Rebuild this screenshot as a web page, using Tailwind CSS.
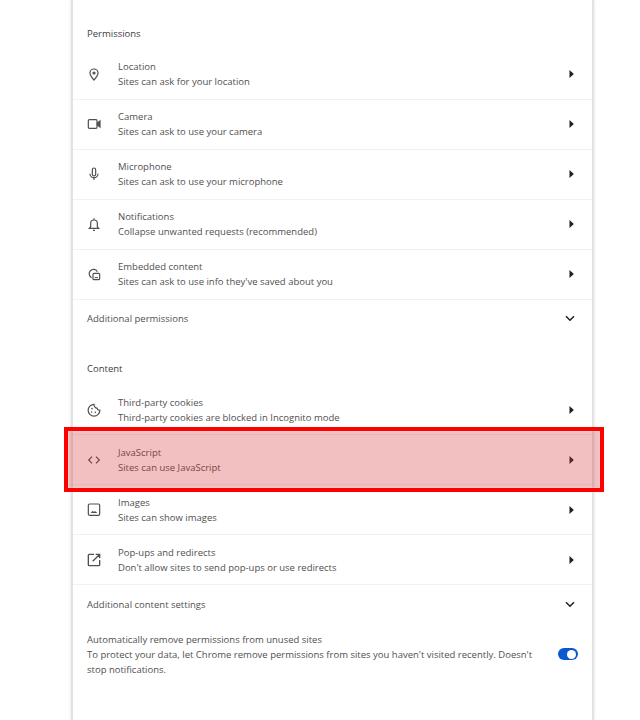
<!DOCTYPE html>
<html>
<head>
    <title>Site settings</title>
    <script src="https://cdn.jsdelivr.net/npm/@tailwindcss/browser@4"></script>
</head>
<body class="bg-white font-['Open_Sans',sans-serif] text-[9.5px] leading-[15px] text-[#505050]">
<div class="relative w-[640px] h-[720px] overflow-hidden">
    <div class="ml-[71px] w-[523px] h-[720px] bg-white border-x-2 border-[#e2e2e2] shadow-[0_0_3px_rgba(0,0,0,0.12)]">
        <!-- Permissions -->
        <h2 class="h-[50px] pt-[26px] pl-[14px] font-medium text-[#3c4043]">Permissions</h2>

        <div class="flex h-[50px] items-center border-b border-[#f1f1f1] pb-[2px] pl-[14px] pr-[18px]">
            <svg class="w-[16px] h-[16px] -ml-px mr-[16px] shrink-0" viewBox="0 0 24 24" fill="none" stroke="#505050" stroke-width="1.800"><path d="M12 21c-4-4.500-6-7.600-6-10.500a6 6 0 0 1 12 0c0 2.900-2 6-6 10.500z"/><circle cx="12" cy="10.500" r="1.500" fill="#505050"/></svg>
            <div class="flex-1 pt-px"><div>Location</div><div>Sites can ask for your location</div></div>
            <svg class="w-[5px] h-[8px]" viewBox="0 0 5 8"><path d="M0.500 0L4.800 4L0.500 8z" fill="#1f1f1f"/></svg>
        </div>
        <div class="flex h-[50px] items-center border-b border-[#f1f1f1] pb-[2px] pl-[14px] pr-[18px]">
            <svg class="w-[16px] h-[16px] -ml-px mr-[16px] shrink-0" viewBox="0 0 24 24" fill="none" stroke="#505050" stroke-width="1.800"><rect x="3.500" y="5.500" width="13" height="13" rx="1.500"/><path d="M17 10.500l4-3v9l-4-3z" fill="#505050"/></svg>
            <div class="flex-1 pt-px"><div>Camera</div><div>Sites can ask to use your camera</div></div>
            <svg class="w-[5px] h-[8px]" viewBox="0 0 5 8"><path d="M0.500 0L4.800 4L0.500 8z" fill="#1f1f1f"/></svg>
        </div>
        <div class="flex h-[50px] items-center border-b border-[#f1f1f1] pb-[2px] pl-[14px] pr-[18px]">
            <svg class="w-[16px] h-[16px] -ml-px mr-[16px] shrink-0" viewBox="0 0 24 24" fill="none" stroke="#505050" stroke-width="1.800"><rect x="9.500" y="3" width="5" height="12" rx="2.500"/><path d="M6 11.500a6 6 0 0 0 12 0M12 17.500V21"/></svg>
            <div class="flex-1 pt-px"><div>Microphone</div><div>Sites can ask to use your microphone</div></div>
            <svg class="w-[5px] h-[8px]" viewBox="0 0 5 8"><path d="M0.500 0L4.800 4L0.500 8z" fill="#1f1f1f"/></svg>
        </div>
        <div class="flex h-[50px] items-center border-b border-[#f1f1f1] pb-[2px] pl-[14px] pr-[18px]">
            <svg class="w-[16px] h-[16px] -ml-px mr-[16px] shrink-0" viewBox="0 0 24 24" fill="none" stroke="#505050" stroke-width="1.800"><path d="M5 18.500h14l-2-2.500v-5a5 5 0 0 0-10 0v5zM12 3.500v2.500M10.500 21.500h3"/></svg>
            <div class="flex-1 pt-px"><div>Notifications</div><div>Collapse unwanted requests (recommended)</div></div>
            <svg class="w-[5px] h-[8px]" viewBox="0 0 5 8"><path d="M0.500 0L4.800 4L0.500 8z" fill="#1f1f1f"/></svg>
        </div>
        <div class="flex h-[50px] items-center border-b border-[#f1f1f1] pb-[2px] pl-[14px] pr-[18px]">
            <svg class="w-[16px] h-[16px] -ml-px mr-[16px] shrink-0" viewBox="0 0 24 24" fill="none" stroke="#505050" stroke-width="1.800"><path d="M8.500 17.500A6.500 6.500 0 1 1 17 8.500"/><rect x="10.500" y="11" width="10" height="9.500" rx="1.500"/><path d="M13 17.500h5" stroke-width="1.500"/></svg>
            <div class="flex-1 pt-px"><div>Embedded content</div><div>Sites can ask to use info they've saved about you</div></div>
            <svg class="w-[5px] h-[8px]" viewBox="0 0 5 8"><path d="M0.500 0L4.800 4L0.500 8z" fill="#1f1f1f"/></svg>
        </div>
        <div class="flex h-[37px] items-center pl-[14px] pr-[18px]">
            <div class="flex-1">Additional permissions</div>
            <svg class="w-[10px] h-[7px] -mr-[1px]" viewBox="0 0 10 7" fill="none" stroke="#1f1f1f" stroke-width="1.500"><path d="M1 1.200l4 4 4-4"/></svg>
        </div>

        <!-- Content -->
        <h2 class="h-[48px] pt-[24px] pl-[14px] font-medium text-[#3c4043]">Content</h2>

        <div class="flex h-[50px] items-center border-b border-[#f1f1f1] pl-[14px] pr-[18px]">
            <svg class="w-[16px] h-[16px] -ml-px mr-[16px] shrink-0" viewBox="0 0 24 24" fill="none" stroke="#505050" stroke-width="1.800"><path d="M12 3.500a8.800 8.800 0 1 0 8.800 8.800c-2.300.300-3.800-.800-4.200-3-2.400.200-4.400-2.200-4.600-5.800z"/><circle cx="9" cy="10" r="1.200" fill="#505050" stroke="none"/><circle cx="8.500" cy="15" r="1.200" fill="#505050" stroke="none"/><circle cx="14" cy="15.500" r="1.200" fill="#505050" stroke="none"/></svg>
            <div class="flex-1 pt-px"><div>Third-party cookies</div><div>Third-party cookies are blocked in Incognito mode</div></div>
            <svg class="w-[5px] h-[8px]" viewBox="0 0 5 8"><path d="M0.500 0L4.800 4L0.500 8z" fill="#1f1f1f"/></svg>
        </div>
        <div class="flex h-[50px] items-center border-b border-[#f1f1f1] pl-[14px] pr-[18px]">
            <svg class="w-[16px] h-[16px] -ml-px mr-[16px] shrink-0" viewBox="0 0 24 24" fill="none" stroke="#505050" stroke-width="1.800"><path d="M9 7l-5 5 5 5M15 7l5 5-5 5"/></svg>
            <div class="flex-1 pt-px"><div>JavaScript</div><div>Sites can use JavaScript</div></div>
            <svg class="w-[5px] h-[8px]" viewBox="0 0 5 8"><path d="M0.500 0L4.800 4L0.500 8z" fill="#1f1f1f"/></svg>
        </div>
        <div class="flex h-[50px] items-center border-b border-[#f1f1f1] pl-[14px] pr-[18px]">
            <svg class="w-[16px] h-[16px] -ml-px mr-[16px] shrink-0" viewBox="0 0 24 24" fill="none" stroke="#505050" stroke-width="1.800"><rect x="3.500" y="3" width="17" height="17" rx="2"/><path d="M7 16.500l3-3.500 2 2 1.500-1.500 3.500 3z" fill="#505050" stroke="none"/></svg>
            <div class="flex-1 pt-px"><div>Images</div><div>Sites can show images</div></div>
            <svg class="w-[5px] h-[8px]" viewBox="0 0 5 8"><path d="M0.500 0L4.800 4L0.500 8z" fill="#1f1f1f"/></svg>
        </div>
        <div class="flex h-[50px] items-center border-b border-[#f1f1f1] pl-[14px] pr-[18px]">
            <svg class="w-[16px] h-[16px] -ml-px mr-[16px] shrink-0" viewBox="0 0 24 24" fill="none" stroke="#505050" stroke-width="2"><path d="M12 3.500H5A1.500 1.500 0 0 0 3.500 5v14A1.500 1.500 0 0 0 5 20.500h14a1.500 1.500 0 0 0 1.500-1.500v-7M10 14L20 4M14.500 3.500h6v6"/></svg>
            <div class="flex-1 pt-px"><div>Pop-ups and redirects</div><div>Don't allow sites to send pop-ups or use redirects</div></div>
            <svg class="w-[5px] h-[8px]" viewBox="0 0 5 8"><path d="M0.500 0L4.800 4L0.500 8z" fill="#1f1f1f"/></svg>
        </div>
        <div class="flex h-[38px] items-center pl-[14px] pr-[18px]">
            <div class="flex-1">Additional content settings</div>
            <svg class="w-[10px] h-[7px] -mr-[1px]" viewBox="0 0 10 7" fill="none" stroke="#1f1f1f" stroke-width="1.500"><path d="M1 1.200l4 4 4-4"/></svg>
        </div>

        <div class="flex items-center pt-[9px] pl-[14px] pr-[14px]">
            <div class="w-[452px]">
                <div>Automatically remove permissions from unused sites</div>
                <div>To protect your data, let Chrome remove permissions from sites you haven't visited recently. Doesn't stop notifications.</div>
            </div>
            <div class="ml-auto -mt-px flex items-center justify-end w-[20px] h-[12px] px-[2px] rounded-full bg-[#0b57d0]">
                <div class="w-[9px] h-[9px] rounded-full bg-white"></div>
            </div>
        </div>
    </div>

    <!-- highlight over the JavaScript row -->
    <div class="absolute left-[64px] top-[427px] w-[540px] h-[65px] border-[4px] border-[#fe0000] bg-[#d32f2f]/30 shadow-[inset_0_0_0_1px_rgba(255,255,255,0.2)]"></div>
</div>
</body>
</html>
